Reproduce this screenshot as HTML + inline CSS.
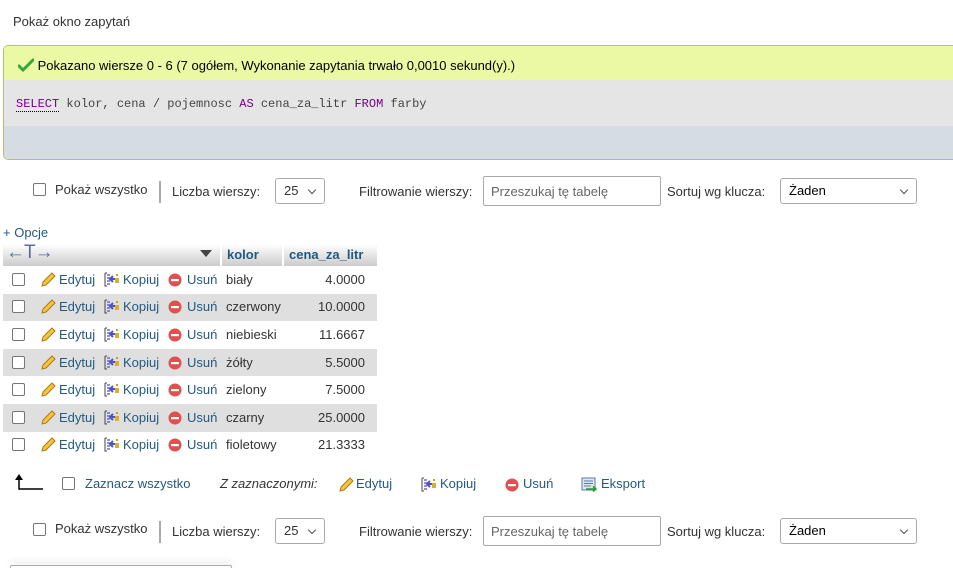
<!DOCTYPE html>
<html style="width:953px;height:568px;overflow:hidden"><head><meta charset="utf-8">
<style>
*{box-sizing:border-box;margin:0;padding:0}
html,body{overflow:hidden}
body{width:953px;height:568px;overflow:hidden;background:#fff;font-family:"Liberation Sans",Arial,sans-serif;font-size:13px;color:#333;position:relative}
.a{position:absolute;white-space:nowrap}
a{color:#235a81;text-decoration:none}
.cb{position:absolute;width:13px;height:13px;border:1px solid #767676;border-radius:2px;background:#fff}
.sel{position:absolute;border:1px solid #aaa;border-radius:3px;background:#fff;height:26px;padding:4px 8px;font-size:13px;color:#333}
.sel:after{content:"";position:absolute;right:9px;top:8px;width:5px;height:5px;border-right:1.3px solid #555;border-bottom:1.3px solid #555;transform:rotate(45deg)}
.inp{position:absolute;border:1px solid #aaa;border-radius:2px;background:#fff;height:30px;padding:7px 7px;color:#666}
.row{position:absolute;left:3px;width:374px;height:27.6px}
.row.g{background:#dfdfdf}
</style></head><body>

<div class="a" style="left:13px;top:14px">Pokaż okno zapytań</div>

<div class="a" style="left:3px;top:45px;width:960px;height:115px;border:1px solid #b8c070;border-radius:5px;overflow:hidden;border-right:none">
 <div style="height:34px;background:#ebf8a4;padding:12px 0 0 14px;color:#000">
  <svg width="16" height="14" style="vertical-align:-2px" viewBox="0 0 16 14"><path d="M1 8 L5 12 L15 2" stroke="#3aa63a" stroke-width="3" fill="none" stroke-linecap="round"/></svg>
  Pokazano wiersze 0 - 6 (7 ogółem, Wykonanie zapytania trwało 0,0010 sekund(y).)</div>
 <div style="height:46px;background:#e5e5e5;padding:17px 0 0 12px;font-family:'Liberation Mono',monospace;font-size:12px;color:#444"><span style="color:#708;border-bottom:1px dotted #000">SELECT</span> kolor, cena / pojemnosc <span style="color:#708">AS</span> cena_za_litr <span style="color:#708">FROM</span> farby</div>
 <div style="height:35px;background:#d5dce3"></div>
</div>

<!-- nav 1 -->
<div class="cb" style="left:33px;top:183px"></div>
<div class="a" style="left:55px;top:182px">Pokaż wszystko</div>
<div class="a" style="left:159px;top:181px;width:2px;height:22px;background:#aaa"></div>
<div class="a" style="left:172px;top:184px">Liczba wierszy:</div>
<div class="sel" style="left:275px;top:178px;width:50px">25</div>
<div class="a" style="left:359px;top:184px">Filtrowanie wierszy:</div>
<div class="inp" style="left:483px;top:176px;width:178px">Przeszukaj tę tabelę</div>
<div class="a" style="left:667px;top:184px">Sortuj wg klucza:</div>
<div class="sel" style="left:780px;top:178px;width:137px;color:#000">Żaden</div>

<a class="a" style="left:3px;top:225px">+ Opcje</a>

<!-- header -->
<div class="a" style="left:3px;top:244px;width:374px;height:22px;background:linear-gradient(#fff,#ccc)"></div>
<div class="a" style="left:220px;top:244px;width:2px;height:22px;background:#fff"></div>
<div class="a" style="left:282px;top:244px;width:2px;height:22px;background:#fff"></div>
<div class="a" style="left:6px;top:242px;color:#5a6e98;font-size:19px;letter-spacing:-1px">←T→</div>
<div class="a" style="left:200px;top:250px;width:0;height:0;border-left:6px solid transparent;border-right:6px solid transparent;border-top:7px solid #444"></div>
<a class="a" style="left:227px;top:247px;font-weight:bold">kolor</a>
<a class="a" style="left:289px;top:247px;font-weight:bold">cena_za_litr</a>

<div id="rows"></div>

<!-- footer actions -->
<svg class="a" style="left:14px;top:474px" width="30" height="18" viewBox="0 0 30 18"><path d="M5 4 V15 H29" stroke="#000" stroke-width="1.5" fill="none"/><path d="M1 6 L5 0 L9 6Z" fill="#000"/></svg>
<div class="cb" style="left:62px;top:477px"></div>
<a class="a" style="left:85px;top:476px">Zaznacz wszystko</a>
<div class="a" style="left:220px;top:476px;font-style:italic">Z zaznaczonymi:</div>
<svg class="a" style="left:338px;top:477px" width="16" height="16" viewBox="0 0 16 16"><path d="M2 14 L3 10 L12 1 L15 4 L6 13Z" fill="#f4c542" stroke="#b07a10"/></svg>
<a class="a" style="left:356px;top:476px">Edytuj</a>
<div class="a" style="left:420px;top:477px" data-i="copy"></div>
<a class="a" style="left:440px;top:476px">Kopiuj</a>
<svg class="a" style="left:505px;top:478px" width="14" height="14"><circle cx="7" cy="7" r="6.5" fill="#e05050"/><rect x="3" y="6" width="8" height="2.2" fill="#fff"/></svg>
<a class="a" style="left:523px;top:476px">Usuń</a>
<svg class="a" style="left:581px;top:477px" width="17" height="15" viewBox="0 0 17 15"><rect x="1" y="1" width="13" height="12" fill="#dde6f0" stroke="#5a7aa0"/><path d="M3 4H12M3 6.5H12M3 9H10" stroke="#5a7aa0"/><path d="M5 12H15M12 9.5L15 12L12 14.5" stroke="#2a9a2a" stroke-width="1.5" fill="none"/></svg>
<a class="a" style="left:601px;top:476px">Eksport</a>

<!-- nav 2 -->
<div class="cb" style="left:33px;top:523px"></div>
<div class="a" style="left:55px;top:521px">Pokaż wszystko</div>
<div class="a" style="left:159px;top:521px;width:2px;height:22px;background:#aaa"></div>
<div class="a" style="left:172px;top:524px">Liczba wierszy:</div>
<div class="sel" style="left:275px;top:518px;width:50px">25</div>
<div class="a" style="left:359px;top:524px">Filtrowanie wierszy:</div>
<div class="inp" style="left:483px;top:516px;width:178px">Przeszukaj tę tabelę</div>
<div class="a" style="left:667px;top:524px">Sortuj wg klucza:</div>
<div class="sel" style="left:780px;top:518px;width:137px;color:#000">Żaden</div>

<div class="a" style="left:10px;top:565px;width:222px;height:3px;border:1px solid #aaa;border-bottom:none;border-radius:2px 2px 0 0;box-shadow:0 -3px 8px #ddd"></div>

<script>
var copy='<svg width="17" height="15" viewBox="0 0 17 15"><path d="M2 1H4M2 1V14H4" stroke="#444" fill="none"/><path d="M4 3H7M4 6H7M4 9H7M4 12H7" stroke="#6a6ad0" stroke-width="1.5"/><path d="M14 7H7M10 4L7 7L10 10" stroke="#5050c8" stroke-width="2" fill="none"/><rect x="13" y="2" width="2" height="2" fill="#c9a020"/><rect x="12" y="6" width="4" height="5" fill="#d8b030"/></svg>';
document.querySelector('[data-i]').innerHTML=copy;
var d=[["biały","4.0000"],["czerwony","10.0000"],["niebieski","11.6667"],["żółty","5.5000"],["zielony","7.5000"],["czarny","25.0000"],["fioletowy","21.3333"]];
var h="";
d.forEach(function(r,i){
 var t=266+i*27.6, c=t+13.8;
 h+='<div class="row'+(i%2?' g':'')+'" style="top:'+t+'px"></div>';
 h+='<div class="cb" style="left:12px;top:'+(c-7)+'px"></div>';
 h+='<svg class="a" style="left:40px;top:'+(c-8)+'px" width="16" height="16" viewBox="0 0 16 16"><path d="M2 14 L3 10 L12 1 L15 4 L6 13Z" fill="#f4c542" stroke="#b07a10"/></svg>';
 h+='<a class="a" style="left:59px;top:'+(c-8)+'px">Edytuj</a>';
 h+='<div class="a" style="left:103px;top:'+(c-8)+'px">'+copy+'</div>';
 h+='<a class="a" style="left:123px;top:'+(c-8)+'px">Kopiuj</a>';
 h+='<svg class="a" style="left:168px;top:'+(c-7)+'px" width="14" height="14"><circle cx="7" cy="7" r="6.5" fill="#e05050"/><rect x="3" y="6" width="8" height="2.2" fill="#fff"/></svg>';
 h+='<a class="a" style="left:187px;top:'+(c-8)+'px">Usuń</a>';
 h+='<div class="a" style="left:226px;top:'+(c-8)+'px">'+r[0]+'</div>';
 h+='<div class="a" style="left:284px;width:81px;text-align:right;top:'+(c-8)+'px">'+r[1]+'</div>';
});
document.getElementById('rows').innerHTML=h;
</script>
</body></html>
